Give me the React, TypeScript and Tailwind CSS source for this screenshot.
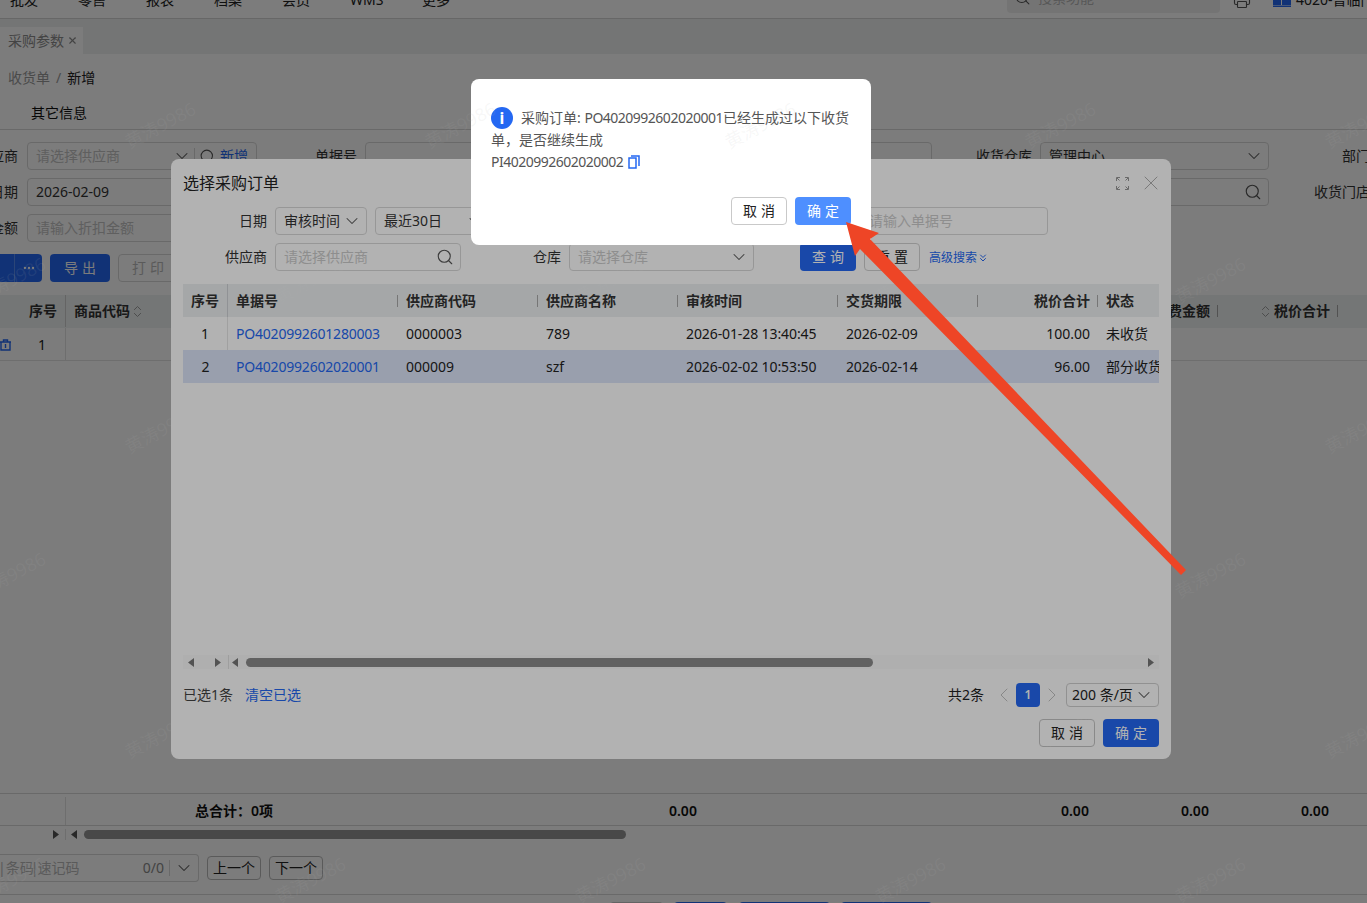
import { ChevronDown, ChevronLeft, ChevronRight, ChevronsDown, ChevronsUpDown, MoreHorizontal, Printer, Search, X } from 'lucide-react'

const blue = 'bg-[#2468f2]'

const navItems = ['批发', '零售', '报表', '档案', '会员', 'WMS']

const orderCols = [
  { title: '序号', cls: 'w-[45px] justify-center border-r border-[#cfd2d6]' },
  { title: '单据号', cls: 'w-[170px] pl-2' },
  { title: '供应商代码', cls: 'w-[140px] pl-2' },
  { title: '供应商名称', cls: 'w-[140px] pl-2' },
  { title: '审核时间', cls: 'w-[160px] pl-2' },
  { title: '交货期限', cls: 'w-[140px] pl-2' },
  { title: '税价合计', cls: 'w-[120px] justify-end pr-2' },
  { title: '状态', cls: 'w-[61px] pl-2' },
]

const orders = [
  { no: '1', code: 'PO4020992601280003', sup: '0000003', name: '789', time: '2026-01-28 13:40:45', due: '2026-02-09', total: '100.00', status: '未收货', selected: false },
  { no: '2', code: 'PO4020992602020001', sup: '000009', name: 'szf', time: '2026-02-02 10:53:50', due: '2026-02-14', total: '96.00', status: '部分收货', selected: true },
]

// staggered watermark, offset every second row
const marks = [125, 280, 430, 575, 735, 880].flatMap((y, i) =>
  [0, 1, 2, 3, 4].map((n) => ({ x: (i % 2 === 0 ? 160 : 10) + n * 300, y })),
)

function Arrow({ dir, className = '' }: { dir: 'l' | 'r'; className?: string }) {
  return (
    <svg width="6" height="9" viewBox="0 0 6 9" className={`shrink-0 ${className}`}>
      <polygon points={dir === 'l' ? '6,0 6,9 0,4.5' : '0,0 0,9 6,4.5'} fill="currentColor" />
    </svg>
  )
}

function Caret() {
  return <ChevronDown size={20} strokeWidth={1.25} className="text-[#555] -mr-1 shrink-0" />
}

function Magnifier({ size = 18, className = '' }: { size?: number; className?: string }) {
  return <Search size={size} strokeWidth={1.5} className={`text-[#555] shrink-0 ${className}`} />
}

function FormLabel({ text, w }: { text: string; w: string }) {
  return <div className={`${w} flex justify-end whitespace-nowrap text-[#333] shrink-0`}>{text}</div>
}

function Box({ className = '', children }: { className?: string; children?: React.ReactNode }) {
  return (
    <div className={`h-7 border border-[#d9d9d9] rounded flex items-center px-2 shrink-0 bg-white text-[#333] ${className}`}>
      {children}
    </div>
  )
}

function Page() {
  return (
    <div className="h-[903px] flex flex-col bg-white text-sm text-[#333]">
      <header className="h-[19px] shrink-0 border-b border-[#d4d4d4] overflow-hidden">
        <div className="h-9 -mt-[18px] flex items-center pl-[10px]">
          {navItems.map((n) => (
            <div key={n} className="w-[68px] shrink-0 text-[#222]">{n}</div>
          ))}
          <div className="w-[68px] shrink-0 pl-1 text-[#222] whitespace-nowrap">更多 ˅</div>
          <div className="ml-[521px] w-[213px] h-[31px] -mt-[5px] shrink-0 rounded bg-[#f0f0f0] flex items-center pl-[7px] gap-[3px] text-[#b5b5b5]">
            <Magnifier size={17} />
            <span className="ml-1">搜索功能</span>
          </div>
          <Printer size={18} strokeWidth={1.5} className="ml-[13px] text-[#555] shrink-0" />
          <svg width="18" height="8" viewBox="0 0 18 8" className="ml-[22px] mt-[17px] self-start shrink-0">
            <rect width="8" height="6" fill="#2468f2" />
            <rect x="9" width="9" height="6" fill="#2468f2" />
            <rect y="6.5" width="18" height="1.5" fill="#2468f2" />
          </svg>
          <span className="ml-[5px] -mt-[1px] whitespace-nowrap text-[#222]">4020-普临门店</span>
        </div>
      </header>

      <div className="h-[35px] shrink-0 bg-[#eef1f1] flex items-end">
        <div className="w-[83px] h-[27px] bg-white flex items-center pl-2 text-[#8d8d8d] gap-[3px]">
          采购参数
          <X size={11} strokeWidth={2.5} />
        </div>
      </div>

      <div className="h-12 shrink-0 flex items-center pl-2">
        <span className="text-[#9a9a9a]">收货单</span>
        <span className="mx-[6px] text-[#9a9a9a]">/</span>
        <span className="text-[#222]">新增</span>
      </div>

      <div className="h-7 shrink-0 border-b border-[#d9d9d9] pl-[31px] flex items-center pb-[5px] text-[#111]">其它信息</div>

      <div className="shrink-0 pt-3 flex flex-col gap-2">
        <div className="flex items-center">
          <FormLabel text="供应商" w="w-[18px]" />
          <Box className="ml-[9px] w-[230px] text-[#c4c4c4]">
            <span className="flex-1">请选择供应商</span>
            <Caret />
            <span className="ml-[6px] w-px h-4 bg-[#d9d9d9] mr-[4px] shrink-0" />
            <Magnifier size={17} />
            <span className="ml-[4px] text-[#2468f2] whitespace-nowrap">新增</span>
          </Box>
          <FormLabel text="单据号" w="w-[100px]" />
          <Box className="ml-2 w-[567px]" />
          <FormLabel text="收货仓库" w="w-[100px]" />
          <Box className="ml-2 w-[229px] justify-between">
            管理中心
            <Caret />
          </Box>
          <FormLabel text="部门" w="w-[101px]" />
        </div>
        <div className="flex items-center">
          <FormLabel text="日期" w="w-[18px]" />
          <Box className="ml-[9px] w-[230px]">2026-02-09</Box>
          <div className="w-[783px] shrink-0" />
          <Box className="w-[229px] justify-end">
            <Magnifier className="-mr-[2px]" />
          </Box>
          <FormLabel text="收货门店" w="w-[101px]" />
        </div>
        <div className="flex items-center">
          <FormLabel text="金额" w="w-[18px]" />
          <Box className="ml-[9px] w-[230px] text-[#c4c4c4]">请输入折扣金额</Box>
        </div>
      </div>

      <div className="shrink-0 mt-3 h-7 flex items-center text-white">
        <div className={`w-[42px] h-7 ${blue} rounded-r flex justify-end`}>
          <span className="w-7 border-l border-[#5a8ef5] flex items-center justify-center">
            <MoreHorizontal size={14} />
          </span>
        </div>
        <div className={`ml-2 w-[60px] h-7 ${blue} rounded flex items-center justify-center tracking-[4px] pl-1`}>导出</div>
        <div className="ml-2 w-[60px] h-7 border border-[#d9d9d9] rounded flex items-center justify-center tracking-[4px] pl-1 text-[#bbb]">打印</div>
      </div>

      <div className="flex-1 mt-[13px] flex flex-col min-h-0">
        <div className="h-[33px] shrink-0 bg-[#f0f3f4] flex items-center pb-[1px] font-semibold text-[#333]">
          <div className="w-[66px] h-full border-r border-[#cfcfcf] flex items-center justify-end pr-2">序号</div>
          <div className="pl-2 flex items-center">
            商品代码
            <ChevronsUpDown size={15} strokeWidth={1.5} className="text-[#999]" />
          </div>
          <div className="ml-auto pr-[29px] flex items-center">
            <span className="whitespace-nowrap">运费金额</span>
            <span className="ml-[7px] w-px h-3 bg-[#aaa]" />
            <ChevronsUpDown size={15} strokeWidth={1.5} className="ml-[40px] text-[#999]" />
            <span className="ml-[1px] whitespace-nowrap">税价合计</span>
            <span className="ml-[7px] w-px h-3 bg-[#aaa]" />
          </div>
        </div>
        <div className="h-[33px] shrink-0 flex items-center border-b border-[#e3e3e3] text-[#222]">
          <div className="w-[66px] h-full border-r border-[#e3e3e3] flex items-center justify-between pt-[2px] pr-[19px]">
            <svg width="11" height="12" viewBox="0 0 11 12" fill="none" stroke="#2468f2" strokeWidth="1.4">
              <path d="M0 3h11M3.5 3V1h4v2M1 3v8h9V3M5.5 5v4" />
            </svg>
            <span>1</span>
          </div>
        </div>
      </div>

      <div className="h-[33px] shrink-0 border-y border-[#d9d9d9] flex items-center pt-[3px] font-semibold text-[#111]">
        <div className="w-[66px] h-full border-r border-[#e3e3e3]" />
        <span className="ml-[129px] w-[474px] whitespace-nowrap">总合计：0项</span>
        <span className="w-[392px]">0.00</span>
        <span className="w-[120px]">0.00</span>
        <span className="w-[120px]">0.00</span>
        <span>0.00</span>
      </div>
      <div className="h-[14px] shrink-0 pt-[3px] flex items-center text-[#555]">
        <Arrow dir="r" className="ml-[53px]" />
        <div className="ml-[6px] w-px h-full bg-[#e3e3e3]" />
        <Arrow dir="l" className="ml-[5px]" />
        <div className="ml-[7px] w-[542px] h-[9px] rounded-full bg-[#959595]" />
      </div>
      <div className="h-[54px] shrink-0 pt-[2px] flex items-center gap-2">
        <div className="w-[199px] h-7 border border-[#d9d9d9] border-l-0 rounded-r flex items-center text-[#b9b9b9]">
          <span className="flex-1 whitespace-nowrap pl-[1px]">
            <span className="-ml-[3px] mr-[3px] tracking-[-3px]">|</span>条码
            <span className="-ml-[3px] mr-[2px] tracking-[-3px]">|</span>速记码
          </span>
          <span className="text-[#8a8a8a] pr-[3px]">0/0</span>
          <span className="w-px h-4 bg-[#d9d9d9] ml-[2px] mr-[4px]" />
          <Caret />
          <span className="w-[8px]" />
        </div>
        <div className="w-[54px] h-6 border border-[#bbb] rounded flex items-center justify-center text-[#222]">上一个</div>
        <div className="w-[54px] h-6 border border-[#bbb] rounded flex items-center justify-center text-[#222]">下一个</div>
      </div>
      <div className="h-[9px] shrink-0 border-t border-[#d9d9d9] overflow-hidden pt-[7px] flex">
        <div className="ml-[610px] w-[53px] h-7 bg-[#ccc] rounded" />
        <div className={`ml-[11px] w-[53px] h-7 ${blue} rounded`} />
        <div className={`ml-3 w-[91px] h-7 ${blue} rounded`} />
        <div className={`ml-[11px] w-[91px] h-7 ${blue} rounded`} />
      </div>
    </div>
  )
}

function OrderDialog() {
  return (
    <div className="absolute left-[171px] top-[159px] w-[1000px] h-[600px] rounded-lg bg-white px-3 flex flex-col text-sm text-[#222]">
      <div className="h-12 shrink-0 flex items-center text-base text-[#222]">
        选择采购订单
        <svg width="13" height="13" viewBox="0 0 13 13" fill="none" stroke="#999" strokeWidth="1" className="ml-auto mr-[10px]">
          <path d="M.5 4V.5H4M9 .5h3.5V4M12.5 9v3.5H9M4 12.5H.5V9M1 1l2.5 2.5M12 1L9.5 3.5M12 12L9.5 9.5M1 12l2.5-2.5" />
        </svg>
        <X size={24} strokeWidth={0.8} className="text-[#999] -mr-1" />
      </div>

      <div className="flex items-center shrink-0">
        <FormLabel text="日期" w="w-[84px]" />
        <Box className="ml-2 w-[92px] justify-between">
          审核时间
          <Caret />
        </Box>
        <Box className="ml-2 w-[115px] justify-between">
          最近30日
          <Caret />
        </Box>
        <Box className="ml-[370px] w-[188px] text-[#ccc]">
          <span className="whitespace-nowrap">请输入单据号</span>
        </Box>
      </div>
      <div className="flex items-center shrink-0 mt-2">
        <FormLabel text="供应商" w="w-[84px]" />
        <Box className="ml-2 w-[186px] justify-between text-[#ccc]">
          请选择供应商
          <Magnifier className="-mr-[2px]" />
        </Box>
        <FormLabel text="仓库" w="w-[100px]" />
        <Box className="ml-2 w-[185px] justify-between text-[#ccc]">
          请选择仓库
          <Caret />
        </Box>
        <div className={`ml-[46px] w-14 h-7 ${blue} rounded flex items-center justify-center text-white tracking-[4px] pl-1`}>查询</div>
        <div className="ml-2 w-14 h-7 border border-[#d0d0d0] rounded flex items-center justify-center tracking-[4px] pl-1">重置</div>
        <div className="ml-[9px] mt-[1px] text-xs text-[#2468f2] flex items-center">
          高级搜索
          <ChevronsDown size={12} />
        </div>
      </div>

      <div className="mt-[13px] shrink-0 overflow-hidden">
        <div className="h-[33px] flex bg-[#ecf0f1] font-semibold text-[#333]">
          {orderCols.map((c, i) => (
            <div key={c.title} className={`${c.cls} shrink-0 flex items-center relative whitespace-nowrap`}>
              {c.title}
              {i > 0 && i < 7 && <span className="absolute right-0 top-[11px] w-px h-3 bg-[#aaa]" />}
            </div>
          ))}
        </div>
        {orders.map((o) => (
          <div key={o.no} className={`h-[33px] flex items-center ${o.selected ? 'bg-[#dce4f8]' : 'bg-white'} text-[#222] whitespace-nowrap`}>
            <div className={`w-[45px] h-full flex items-center justify-center shrink-0 ${o.selected ? '' : 'border-r border-[#e6e6e6]'}`}>{o.no}</div>
            <div className="w-[170px] pl-2 shrink-0 text-[#2468f2] tracking-[-0.2px]">{o.code}</div>
            <div className="w-[140px] pl-2 shrink-0">{o.sup}</div>
            <div className="w-[140px] pl-2 shrink-0">{o.name}</div>
            <div className="w-[160px] pl-2 shrink-0 tracking-[-0.1px]">{o.time}</div>
            <div className="w-[140px] pl-2 shrink-0 tracking-[-0.15px]">{o.due}</div>
            <div className="w-[120px] pr-2 shrink-0 text-right">{o.total}</div>
            <div className="w-[61px] pl-2 shrink-0 overflow-hidden">{o.status}</div>
          </div>
        ))}
      </div>

      <div className="mt-[272px] h-[14px] shrink-0 flex items-center text-[#777] bg-[#fbfbfb]">
        <Arrow dir="l" className="ml-[5px]" />
        <Arrow dir="r" className="ml-[21px]" />
        <div className="ml-[7px] w-px h-full bg-[#e3e3e3]" />
        <Arrow dir="l" className="ml-[3px]" />
        <div className="ml-[8px] w-[627px] h-[9px] rounded-full bg-[#8c8c8c]" />
        <Arrow dir="r" className="ml-auto mr-[5px]" />
      </div>

      <div className="mt-[14px] h-6 shrink-0 flex items-center">
        <span className="text-[#444]">已选1条</span>
        <span className="ml-3 text-[#2468f2]">清空已选</span>
        <span className="ml-auto text-[#222]">共2条</span>
        <ChevronLeft size={24} strokeWidth={0.9} className="ml-2 text-[#bbb]" />
        <div className={`w-6 h-6 ${blue} rounded flex items-center justify-center text-white text-xs font-semibold`}>1</div>
        <ChevronRight size={24} strokeWidth={0.9} className="text-[#bbb]" />
        <div className="ml-[2px] w-[93px] h-6 border border-[#d0d0d0] rounded flex items-center justify-between pl-[5px] pr-[6px] text-[#222]">
          200 条/页
          <ChevronDown size={20} strokeWidth={1.25} className="text-[#555] -mr-[2px]" />
        </div>
      </div>
      <div className="mt-3 flex justify-end gap-2 shrink-0">
        <div className="w-14 h-7 border border-[#c4c4c4] rounded flex items-center justify-center tracking-[4px] pl-1">取消</div>
        <div className={`w-14 h-7 ${blue} rounded flex items-center justify-center text-white tracking-[4px] pl-1`}>确定</div>
      </div>
    </div>
  )
}

function ConfirmDialog() {
  return (
    <div className="absolute left-[471px] top-[79px] w-[400px] h-[166px] rounded-lg bg-white px-5 pt-7 text-sm leading-[22px] text-[#555] whitespace-nowrap">
      <div>
        <span className="inline-flex w-[22px] h-[22px] rounded-full bg-[#2468f2] items-center justify-center align-top mr-2 text-base text-white font-bold">i</span>
        采购订单: <span className="tracking-[-0.5px]">PO4020992602020001</span>已经生成过以下收货
        <br />
        单，是否继续生成
        <br />
        <span className="tracking-[-0.5px]">PI4020992602020002</span>
        <svg width="12" height="14" viewBox="0 0 12 14" fill="none" stroke="#2468f2" strokeWidth="1.5" className="inline-block ml-[5px] align-[-2px]">
          <path d="M3 1h8v10M1 3h7v10H1z" />
        </svg>
      </div>
      <div className="mt-6 flex justify-end gap-2">
        <div className="w-14 h-7 border border-[#c9c9c9] rounded flex items-center justify-center tracking-[4px] pl-1 text-[#222]">取消</div>
        <div className="w-14 h-7 bg-[#4e8fff] rounded flex items-center justify-center text-white tracking-[4px] pl-1">确定</div>
      </div>
    </div>
  )
}

export default function App() {
  return (
    <div className="relative w-full h-[903px] overflow-hidden font-['Noto_Sans','Noto_Sans_CJK_SC',sans-serif]">
      <Page />
      <div className="absolute inset-0 bg-black/30" />
      <OrderDialog />
      <div className="absolute inset-0 bg-black/30" />
      <ConfirmDialog />

      {marks.map((m) => (
        <div
          key={`${m.x}-${m.y}`}
          className="absolute -translate-x-1/2 -translate-y-1/2 -rotate-[28deg] text-lg whitespace-nowrap text-[#b4b4b4]/10 pointer-events-none"
          style={{ left: m.x, top: m.y }}
        >
          黄涛9986
        </div>
      ))}

      <svg className="absolute inset-0 pointer-events-none" width="1367" height="903">
        <polygon points="846,222 879,233 870,239 1186,570 1181,575 860,249 855,256" fill="#ee4526" />
      </svg>
    </div>
  )
}
